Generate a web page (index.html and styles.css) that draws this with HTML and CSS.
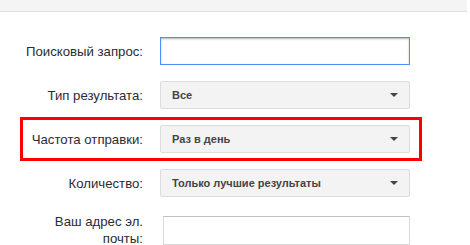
FILE: index.html
```html
<!DOCTYPE html>
<html lang="ru">
<head>
  <meta charset="UTF-8" />
  <title>Оповещения</title>
  <link rel="stylesheet" href="styles.css">
</head>
<body>
  <div class="topbar"></div>

  <form class="alert-form">
    <div class="row">
      <label class="label" for="query">Поисковый запрос:</label>
      <input type="text" id="query" class="field focused">
    </div>

    <div class="row">
      <span class="label">Тип результата:</span>
      <div class="menu-button"><span>Все</span><i class="arrow"></i></div>
    </div>

    <div class="row highlight">
      <span class="label">Частота отправки:</span>
      <div class="menu-button"><span>Раз в день</span><i class="arrow"></i></div>
    </div>

    <div class="row">
      <span class="label">Количество:</span>
      <div class="menu-button"><span>Только лучшие результаты</span><i class="arrow"></i></div>
    </div>

    <div class="row">
      <label class="label" for="email">Ваш адрес эл. почты:</label>
      <input type="text" id="email" class="field email">
    </div>
  </form>
</body>
</html>
```

FILE: styles.css
```css
* {
  box-sizing: border-box;
  margin: 0;
  padding: 0;
}

body {
  font-family: "Liberation Sans", Arial, sans-serif;
  font-size: 13px;
  color: #333;
  background: #fff;
}

.topbar {
  height: 12px;
  margin-right: 3px;
  background: #f4f4f4;
  border-bottom: 1px solid #e0e0e0;
}

.alert-form {
  padding: 17px 0 0 20px;
  width: 422px;
}

.row {
  display: grid;
  grid-template-columns: 123px 250px;
  column-gap: 17px;
  align-items: center;
  padding: 8px 12px 8px 0;
}

.row.highlight {
  outline: 3px solid #f00;
  outline-offset: -3px;
}

.label {
  text-align: right;
  line-height: 17px;
  font-size: 13.2px;
  color: #2b2b33;
}

.field {
  height: 28px;
  border: 1px solid #d9d9d9;
  border-top-color: #c0c0c0;
  outline: none;
  font: inherit;
  padding: 0 8px;
}

.field.focused {
  border: 1px solid #4d90fe;
  box-shadow: inset 0 1px 2px rgba(0,0,0,0.3);
}

.field.email {
  height: 29px;
  margin-left: 3px;
  width: 247px;
}

.menu-button {
  height: 28px;
  display: flex;
  align-items: center;
  justify-content: space-between;
  padding: 0 11px 0 11px;
  background: #f3f3f3;
  border: 1px solid #dcdcdc;
  border-radius: 2px;
  font-weight: bold;
  font-size: 11px;
  color: #444;
}

.arrow {
  width: 0;
  height: 0;
  border-left: 4px solid transparent;
  border-right: 4px solid transparent;
  border-top: 4px solid #444;
}
```
